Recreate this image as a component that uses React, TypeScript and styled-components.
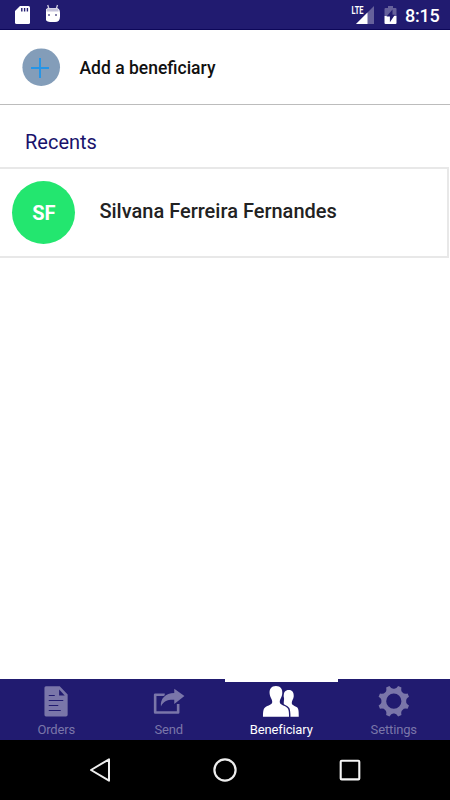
import React from "react";
import styled, { createGlobalStyle } from "styled-components";

const GlobalStyle = createGlobalStyle`
  * { box-sizing: border-box; }
  body { margin: 0; background: #fff; font-family: Roboto, "Liberation Sans", sans-serif; }
  svg { display: block; }
`;

const Screen = styled.div`
  width: 450px;
  height: 800px;
  display: flex;
  flex-direction: column;
  overflow: hidden;
  background: #fff;
`;

const StatusBar = styled.header`
  height: 30px;
  flex: none;
  display: flex;
  align-items: flex-start;
  background: #211b70;
  border-bottom: 1px solid #0d0759;
`;

const StatusSpacer = styled.div`
  flex: 1;
`;

const Clock = styled.div`
  width: 45px;
  padding-top: 5px;
  font-size: 18px;
  line-height: 22px;
  font-weight: 500;
  letter-spacing: -0.2px;
  color: #fff;
`;

const AddRow = styled.div`
  height: 75px;
  flex: none;
  display: flex;
  align-items: center;
  padding-left: 22px;
  gap: 18.5px;
  border-bottom: 1px solid #bcbcbc;
`;

const AddLabel = styled.div`
  padding-top: 1px;
  font-size: 17.5px;
  line-height: 20px;
  font-weight: 500;
  letter-spacing: 0;
  color: #101010;
`;

const SectionTitle = styled.h2`
  height: 62px;
  flex: none;
  margin: 0;
  padding: 24px 0 0 25px;
  font-size: 20px;
  line-height: 26px;
  font-weight: 400;
  color: #19126b;
`;

const Card = styled.div`
  width: 449px;
  height: 91px;
  flex: none;
  display: flex;
  align-items: flex-start;
  padding: 12px 0 0 12.4px;
  gap: 24px;
  border: 2px solid #e8e8e8;
  border-left: 0;
`;

const Avatar = styled.div`
  width: 63px;
  height: 63px;
  border-radius: 50%;
  display: flex;
  align-items: center;
  justify-content: center;
  background: #23e66f;
  color: #fff;
  font-size: 20px;
  line-height: 24px;
  font-weight: 700;
`;

const PersonName = styled.div`
  padding-top: 17px;
  font-size: 20px;
  line-height: 26px;
  font-weight: 500;
  color: #222;
`;

const Content = styled.main`
  flex: 1;
  display: flex;
  flex-direction: column;
`;

const TabBar = styled.nav`
  height: 61px;
  flex: none;
  display: flex;
  background: #211b70;
`;

const Tab = styled.div<{ $active?: boolean }>`
  flex: 1;
  display: flex;
  flex-direction: column;
  align-items: center;
  padding-top: 4px;
  border-top: 3px solid ${(p) => (p.$active ? "#fff" : "#211b70")};
  color: ${(p) => (p.$active ? "#fff" : "#7a76a9")};
`;

const TabLabel = styled.div`
  margin-top: 3px;
  font-size: 13px;
  line-height: 17px;
  letter-spacing: -0.15px;
`;

const SystemNav = styled.footer`
  height: 60px;
  flex: none;
  display: flex;
  align-items: center;
  justify-content: center;
  gap: 95px;
  background: #000;
`;

const SdIcon = () => (
  <svg width="46" height="29" viewBox="0 0 46 29">
    <path d="M20 6h8.500q1.500 0 1.500 1.500v15q0 1.500-1.500 1.500h-12q-1.500 0-1.500-1.500V11z" fill="#fff" />
    <path d="M21.800 8v3.500M24.600 8v3.500M27.400 8v3.500" stroke="#211b70" strokeWidth="1.400" />
  </svg>
);

const AndroidIcon = () => (
  <svg width="18" height="29" viewBox="46 0 18 29">
    <path d="M47.700 5l1.300 4M57.500 5l-1.300 4" stroke="#d0cee1" strokeWidth="1.300" />
    <path d="M45 13q0-5 4-5h7q4 0 4 5v3.500q0 5.500-5 5.500h-5q-5 0-5-5.500z" fill="#fff" />
    <path d="M46.500 9.500q1-1.300 3-1.300h6q2 0 3 1.300v2h-12z" fill="#c6c4db" />
    <circle cx="49" cy="15" r="1" fill="#5d598f" />
    <circle cx="56" cy="15" r="1" fill="#5d598f" />
  </svg>
);

const SignalText = styled.text`
  font: 700 10px Roboto, sans-serif;
`;

const SignalIcon = () => (
  <svg width="33" height="29" viewBox="350 0 33 29">
    <path d="M374 6v18h-18z" fill="#66619b" />
    <path d="M367.500 12.500V24H356z" fill="#fff" />
    <SignalText x="351.500" y="13.500" fill="#fff" textLength="12" lengthAdjust="spacingAndGlyphs">LTE</SignalText>
  </svg>
);

const BatteryIcon = () => (
  <svg width="22" height="29" viewBox="383 0 22 29">
    <path d="M388 6h5v2h2.500q1 0 1 1v7h-12V9q0-1 1-1h2.500z" fill="#66619b" />
    <path d="M384.500 16h12v7q0 1-1 1h-10q-1 0-1-1z" fill="#fff" />
    <path d="M392.500 9.500l-6 7h3.400v5.800l5-7.500h-2.400z" fill="#211b70" />
  </svg>
);

const PlusIcon = () => (
  <svg width="39" height="38" viewBox="0 0 39 38">
    <circle cx="19.200" cy="19.200" r="18.800" fill="#839db9" />
    <path d="M9 20h18M18 10v20" stroke="#2695e6" strokeWidth="2" />
  </svg>
);

const OrdersIcon = () => (
  <svg width="40" height="32" viewBox="36.250 686 40 32" fill="currentColor">
    <path d="M46.200 686.200H60l7.900 8.300v20.300q0 1.700-1.700 1.700h-20q-1.500 0-1.500-1.700v-27q0-1.600 1.500-1.600z" />
    <path d="M59.400 689.500v6h5.600z" fill="#211b70" />
    <path d="M49 695.500h6M49 700.500h14.500M49 705.500h9.500M49 710.500h12" stroke="#211b70" strokeWidth="1.200" />
  </svg>
);

const SendIcon = () => (
  <svg width="40" height="32" viewBox="148.750 686 40 32">
    <path d="M164.500 694.700h-9.600v17.800h23V704" fill="none" stroke="currentColor" strokeWidth="2.600" strokeLinejoin="round" />
    <path d="M174 688.700l10.200 7.400-10.200 8v-4.400c-7-.2-11 1.500-13.300 6.800-.9-7.800 4.500-13.300 13.300-13.500z" fill="currentColor" stroke="#211b70" strokeWidth="1.600" paintOrder="stroke" />
  </svg>
);

const PeopleIcon = () => (
  <svg width="40" height="32" viewBox="261.250 686 40 32" fill="currentColor">
    <path d="M289 690c3.700 0 5.200 2.600 5 6.200-.2 3.300-2 4.100-2 6.800 0 2.900 5.200 3 6.200 5.400.8 1.800.8 5 .8 8.400H284V703c0-2.500.8-4-.1-6.800-.4-3.600 1.600-6.200 5.100-6.200z" />
    <path d="M276.200 686c4.800 0 6.700 3.200 6.300 7.700-.4 4-2.500 5-2.500 8.300 0 3.500 6.500 3.500 8.300 6.700.8 1.500 1 4.700 1 8.100h-26.100c0-3.400.2-6.600 1-8.100 1.700-3.200 8.300-3.200 8.300-6.700 0-3.300-2.200-4.300-2.600-8.300-.4-4.500 1.500-7.700 6.300-7.700z" stroke="#211b70" strokeWidth="2.800" paintOrder="stroke" />
  </svg>
);

const toothAngles = [0, 45, 90, 135, 180, 225, 270, 315];
const polar = (radius: number, degrees: number) => {
  const a = (degrees * Math.PI) / 180;
  return `${(19.8 + radius * Math.cos(a)).toFixed(2)} ${(15.2 + radius * Math.sin(a)).toFixed(2)}`;
};
const gearPath =
  toothAngles
    .map((n, i) => `${i ? "L" : "M"}${polar(15.8, n + 16)}L${polar(15.8, n + 29)}Q${polar(12.2, n + 34)} ${polar(12.4, n + 45)}Q${polar(12.2, n + 56)} ${polar(15.8, n + 61)}`)
    .join("") + "ZM19.800 7.600a7.600 7.600 0 1 0 0 15.200a7.600 7.600 0 1 0 0-15.200Z";

const SettingsIcon = () => (
  <svg width="40" height="32" viewBox="0 0 40 32" fill="currentColor">
    <path d={gearPath} fillRule="evenodd" />
  </svg>
);

const BackIcon = () => (
  <svg width="30" height="30" viewBox="85 755 30 30">
    <path d="M109 759.300v21.400L91 770z" fill="none" stroke="#eee" strokeWidth="2" strokeLinejoin="round" />
  </svg>
);
const HomeIcon = () => (
  <svg width="30" height="30" viewBox="210 755 30 30">
    <circle cx="225" cy="770" r="10.600" fill="none" stroke="#eee" strokeWidth="2.200" />
  </svg>
);
const RecentsIcon = () => (
  <svg width="30" height="30" viewBox="335 755 30 30">
    <rect x="340.700" y="760.800" width="18.600" height="18.600" rx="1" fill="none" stroke="#f5f5f5" strokeWidth="2.100" />
  </svg>
);

const tabs = [
  { label: "Orders", Icon: OrdersIcon },
  { label: "Send", Icon: SendIcon },
  { label: "Beneficiary", Icon: PeopleIcon, active: true },
  { label: "Settings", Icon: SettingsIcon },
];

export default function App() {
  return (
    <>
      <GlobalStyle />
      <Screen>
        <StatusBar>
          <SdIcon />
          <AndroidIcon />
          <StatusSpacer />
          <SignalIcon />
          <BatteryIcon />
          <Clock>8:15</Clock>
        </StatusBar>
        <Content>
          <AddRow>
            <PlusIcon />
            <AddLabel>Add a beneficiary</AddLabel>
          </AddRow>
          <SectionTitle>Recents</SectionTitle>
          <Card>
            <Avatar>SF</Avatar>
            <PersonName>Silvana Ferreira Fernandes</PersonName>
          </Card>
        </Content>
        <TabBar>
          {tabs.map(({ label, Icon, active }) => (
            <Tab key={label} $active={active}>
              <Icon />
              <TabLabel>{label}</TabLabel>
            </Tab>
          ))}
        </TabBar>
        <SystemNav>
          <BackIcon />
          <HomeIcon />
          <RecentsIcon />
        </SystemNav>
      </Screen>
    </>
  );
}
